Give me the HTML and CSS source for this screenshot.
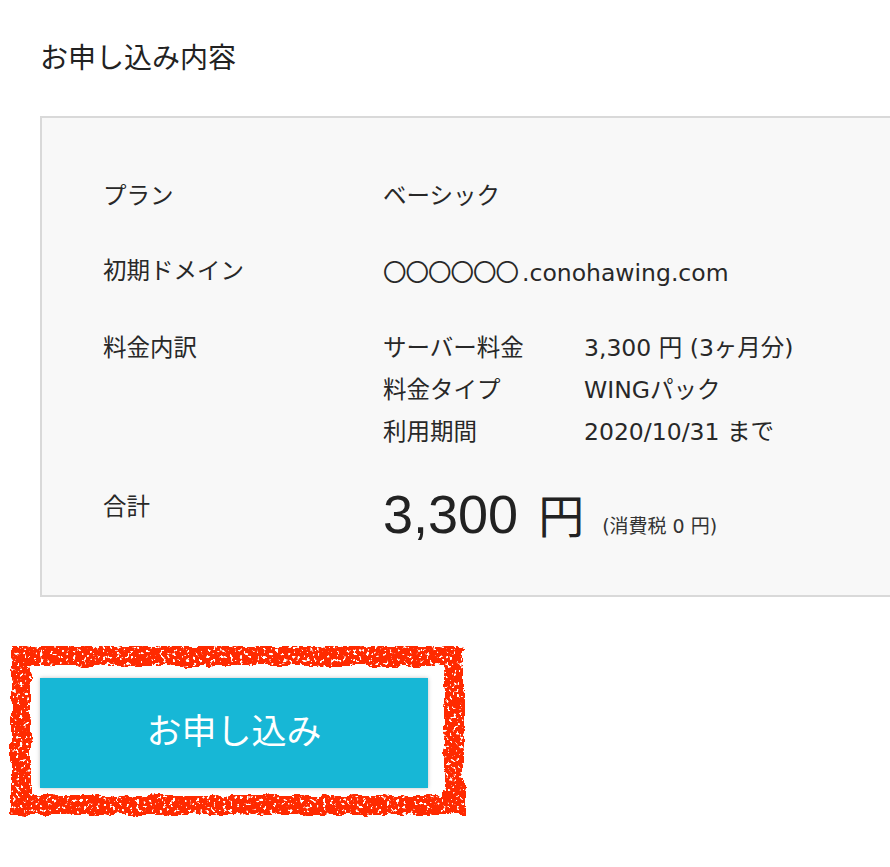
FILE: index.html
```html
<!DOCTYPE html>
<html lang="ja">
<head>
<meta charset="utf-8">
<link rel="stylesheet" href="styles.css">
</head>
<body>
<div class="page">
  <h2 class="title">お申し込み内容</h2>
  <div class="summary">
    <div class="row">
      <div class="label">プラン</div>
      <div class="value">ベーシック</div>
    </div>
    <div class="row">
      <div class="label">初期ドメイン</div>
      <div class="value"><span class="circles">〇〇〇〇〇〇</span>.conohawing.com</div>
    </div>
    <div class="row">
      <div class="label">料金内訳</div>
      <div class="value">
        <div class="breakdown">
          <div class="sub-label">サーバー料金</div><div class="sub-value">3,300 円 (3ヶ月分)</div>
          <div class="sub-label">料金タイプ</div><div class="sub-value">WINGパック</div>
          <div class="sub-label">利用期間</div><div class="sub-value">2020/10/31 まで</div>
        </div>
      </div>
    </div>
    <div class="row total-row">
      <div class="label">合計</div>
      <div class="value total"><span class="amount">3,300</span><span class="yen">円</span><span class="tax">(消費税 0 円)</span></div>
    </div>
  </div>
  <div class="action">
    <button class="apply">お申し込み</button>
    <svg class="marker" width="480" height="200" viewBox="0 0 480 200" aria-hidden="true">
      <defs>
        <filter id="rough" x="-10%" y="-10%" width="120%" height="120%">
          <feTurbulence type="fractalNoise" baseFrequency="0.07" numOctaves="3" seed="4" result="noise"/>
          <feDisplacementMap in="SourceGraphic" in2="noise" scale="8" xChannelSelector="R" yChannelSelector="G" result="disp"/>
          <feTurbulence type="fractalNoise" baseFrequency="0.3" numOctaves="2" seed="9" result="speck"/>
          <feColorMatrix in="speck" type="matrix" values="0 0 0 0 0  0 0 0 0 0  0 0 0 0 0  0 0 0 -14 9.6" result="mask"/>
          <feComposite in="disp" in2="mask" operator="in"/>
        </filter>
      </defs>
      <rect x="21" y="10" width="433" height="149" fill="none" stroke="#ff2a00" stroke-width="20" filter="url(#rough)"/>
    </svg>
  </div>
</div>
</body>
</html>
```
FILE: styles.css
```css
html, body {
  margin: 0;
  padding: 0;
  background: #ffffff;
  overflow: hidden;
}

body {
  font-family: "DejaVu Sans", "Noto Sans CJK JP", sans-serif;
  color: #222222;
}

.page {
  padding: 0 0 0 40px;
  width: 910px;
}

.title {
  margin: 0;
  padding-top: 41px;
  font-family: "Liberation Sans", "Noto Sans CJK JP", sans-serif;
  font-size: 28px;
  font-weight: normal;
  line-height: 36px;
  color: #222;
}

.summary {
  margin-top: 39px;
  width: 880px;
  background: #f8f8f8;
  border: 2px solid #d9d9d9;
  border-right: none;
  padding: 57px 0 42px 61px;
  display: flex;
  flex-direction: column;
  gap: 33px;
  font-size: 23.5px;
  line-height: 42px;
  color: #282828;
}

.row {
  display: grid;
  grid-template-columns: 280px 1fr;
}

.label {
  font-family: "Liberation Sans", "Noto Sans CJK JP", sans-serif;
}

.breakdown {
  display: grid;
  grid-template-columns: 201px 1fr;
}

.sub-label {
  font-family: "Liberation Sans", "Noto Sans CJK JP", sans-serif;
}

.circles {
  font-family: "Noto Sans CJK JP", sans-serif;
  letter-spacing: -1px;
  margin-right: 4px;
}

.total {
  display: flex;
  align-items: baseline;
  line-height: 54px;
}

.amount {
  font-family: "Liberation Sans", sans-serif;
  font-size: 54px;
  color: #222;
}

.yen {
  font-family: "Noto Sans CJK JP", sans-serif;
  font-size: 46px;
  margin-left: 20px;
  color: #222;
}

.tax {
  font-size: 19px;
  margin-left: 18px;
  color: #333;
}

.action {
  position: relative;
  margin-top: 81px;
  height: 200px;
}

.apply {
  display: block;
  box-sizing: border-box;
  width: 388px;
  height: 110px;
  border: none;
  background: #17b7d6;
  color: #ffffff;
  font-family: "Liberation Sans", "Noto Sans CJK JP", sans-serif;
  font-size: 35px;
  box-shadow: 0 0 4px rgba(0, 0, 0, 0.25);
  padding: 0 0 10px 0;
  cursor: pointer;
}

.marker {
  position: absolute;
  left: -40px;
  top: -32px;
  pointer-events: none;
}
```
